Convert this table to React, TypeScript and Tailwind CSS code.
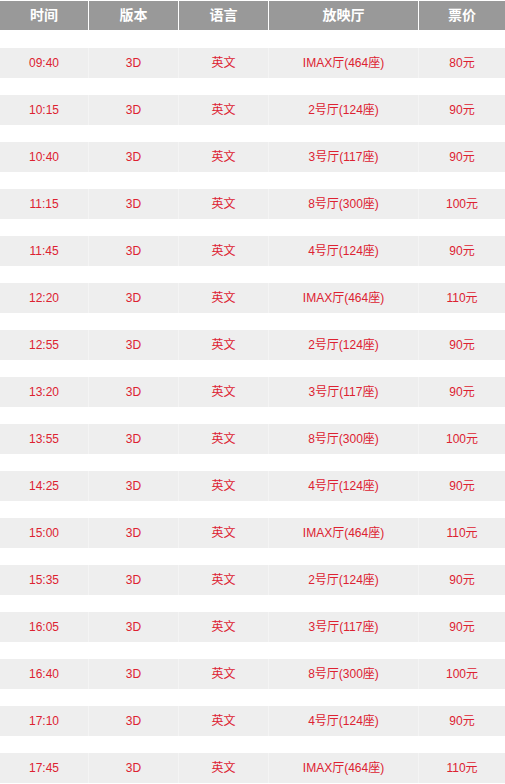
const rows = [
  ["09:40", "IMAX厅(464座)", "80元"],
  ["10:15", "2号厅(124座)", "90元"],
  ["10:40", "3号厅(117座)", "90元"],
  ["11:15", "8号厅(300座)", "100元"],
  ["11:45", "4号厅(124座)", "90元"],
  ["12:20", "IMAX厅(464座)", "110元"],
  ["12:55", "2号厅(124座)", "90元"],
  ["13:20", "3号厅(117座)", "90元"],
  ["13:55", "8号厅(300座)", "100元"],
  ["14:25", "4号厅(124座)", "90元"],
  ["15:00", "IMAX厅(464座)", "110元"],
  ["15:35", "2号厅(124座)", "90元"],
  ["16:05", "3号厅(117座)", "90元"],
  ["16:40", "8号厅(300座)", "100元"],
  ["17:10", "4号厅(124座)", "90元"],
  ["17:45", "IMAX厅(464座)", "110元"],
];

const cols = "grid grid-cols-[89px_90px_90px_150px_86px]";

const App = () => {
  return (
    <div className="w-[505px] bg-white font-['Liberation_Sans','Noto_Sans_CJK_SC',sans-serif]">
      <div className={`${cols} h-[31px] pt-px pb-px bg-white`}>
        {["时间", "版本", "语言", "放映厅", "票价"].map((h, i) => (
          <div
            key={h}
            className={`flex items-center justify-center bg-[#999999] text-[14px] font-bold text-white ${
              i < 4 ? "border-r border-white" : ""
            }`}
          >
            {h}
          </div>
        ))}
      </div>
      {rows.map(([time, hall, price]) => (
        <div key={time}>
          <div className="h-[17px]" />
          <div className={`${cols} h-[30px] bg-[#eeeeee] text-[12px] text-[#dd2231]`}>
            <div className="flex items-center justify-center border-r border-[#f4f4f4]">{time}</div>
            <div className="flex items-center justify-center border-r border-[#f4f4f4]">3D</div>
            <div className="flex items-center justify-center border-r border-[#f4f4f4]">英文</div>
            <div className="flex items-center justify-center border-r border-[#f4f4f4]">{hall}</div>
            <div className="flex items-center justify-center">{price}</div>
          </div>
        </div>
      ))}
    </div>
  );
};

export default App;
